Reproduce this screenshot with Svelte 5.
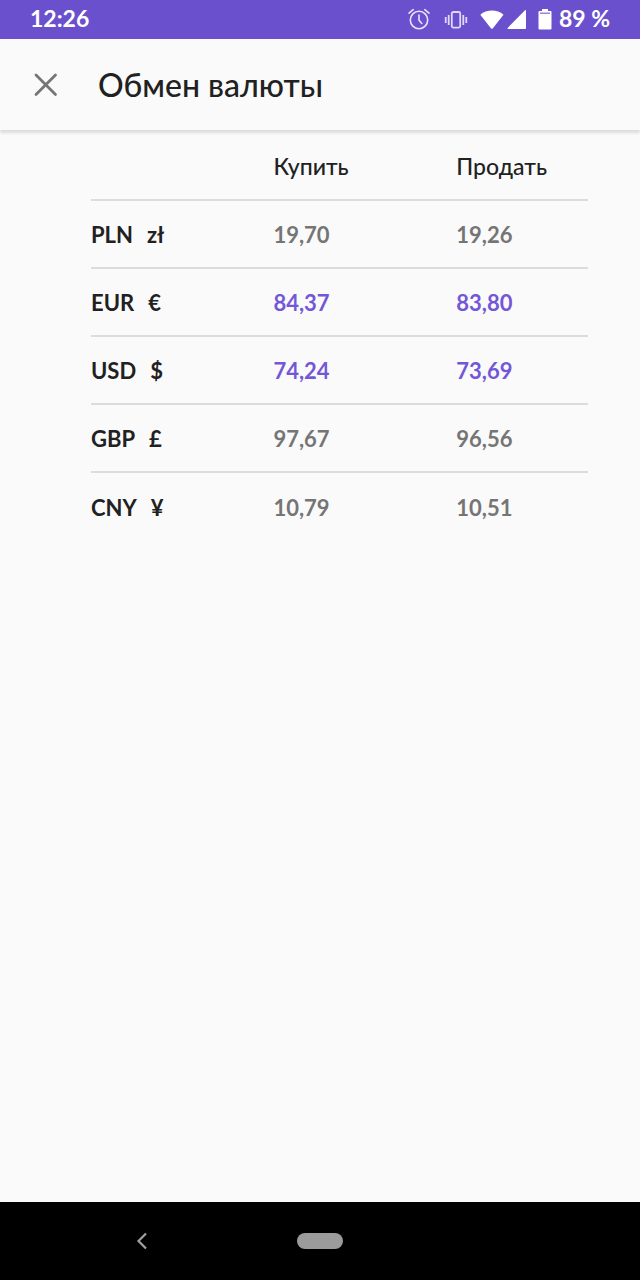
<script>
  const rates = [
    { code: 'PLN', sign: 'zł', buy: '19,70', sell: '19,26', main: false },
    { code: 'EUR', sign: '€', buy: '84,37', sell: '83,80', main: true },
    { code: 'USD', sign: '$', buy: '74,24', sell: '73,69', main: true },
    { code: 'GBP', sign: '£', buy: '97,67', sell: '96,56', main: false },
    { code: 'CNY', sign: '¥', buy: '10,79', sell: '10,51', main: false }
  ];
</script>

<div class="screen">
  <div class="status">
    <span>12:26</span>
    <div class="indicators">
      <svg width="22" height="24" viewBox="0 0 22 24" fill="none" stroke="#e9e3fb" stroke-width="1.6" stroke-linecap="round" aria-hidden="true">
        <circle cx="11" cy="14" r="8.7" />
        <path d="M11 9v5.300l2.800 3.200M1 7.100l4.200-3.400M21 7.100l-4.200-3.400" />
      </svg>
      <svg class="vibrate" width="24" height="24" viewBox="0 0 24 24" fill="none" stroke="#e0d8f8" stroke-width="1.8" aria-hidden="true">
        <rect x="7.8" y="6" width="8.4" height="15.6" rx="1.5" />
        <path d="M4.700 9v10M1.700 11v6M19.300 9v10M22.300 11v6" />
      </svg>
      <svg class="signal" width="47" height="24" viewBox="0 0 47 24" fill="#fff" aria-hidden="true">
        <path d="M0.300 8.700C6.500 3.200 17.300 3.200 23.500 8.700L12.900 22.300Q11.900 23.400 10.900 22.300Z" />
        <path d="M46 4.500v17.500q0 1-1 1H28.200q-1.500 0-.5-1.100L45 4.300q1-.9 1 .2Z" />
      </svg>
      <svg class="battery" width="14" height="24" viewBox="0 0 14 24" aria-hidden="true">
        <path fill="#fff" d="M4 3h6v2h2.500q1 0 1 1V22.500q0 1-1 1h-11q-1 0-1-1V6q0-1 1-1H4Z" />
        <path fill="#9a85df" d="M2 6.500h10v1.500H2Z" />
      </svg>
      <span>89 %</span>
    </div>
  </div>

  <header>
    <button aria-label="Закрыть">
      <svg width="24" height="24" viewBox="0 0 24 24" fill="none" stroke="#757575" stroke-width="2.800" stroke-linecap="round" aria-hidden="true">
        <path d="M2 2l19.500 19.500M21.500 2L2 21.500" />
      </svg>
    </button>
    <h1>Обмен валюты</h1>
  </header>

  <main>
    <table>
      <thead>
        <tr><td></td><th scope="col">Купить</th><th scope="col">Продать</th></tr>
      </thead>
      <tbody>
        {#each rates as rate}
          <tr class:main={rate.main}>
            <th scope="row"><span class="currency"><span>{rate.code}</span><span>{rate.sign}</span></span></th>
            <td>{rate.buy}</td>
            <td>{rate.sell}</td>
          </tr>
        {/each}
      </tbody>
    </table>
  </main>

  <nav>
    <button class="back" aria-label="Назад">
      <svg width="12" height="18" viewBox="0 0 12 18" fill="none" stroke="#a0a0a0" stroke-width="2.200" aria-hidden="true">
        <path d="M10 1.500L2.500 9l7.500 7.500" />
      </svg>
    </button>
    <button class="home" aria-label="Главный экран"></button>
    <span></span>
  </nav>
</div>

<style>
  :global(body) { margin: 0; background: #fafafa; }
  .screen {
    display: flex;
    flex-direction: column;
    min-height: 100vh;
    font-family: Lato, "Open Sans", sans-serif;
    color: #212121;
    background: #fafafa;
  }
  .status {
    box-sizing: border-box;
    display: flex;
    align-items: center;
    justify-content: space-between;
    height: 39px;
    padding: 0 30px 3px;
    color: #fff;
    background: #6b50cd;
    font-size: 23px;
    font-weight: 700;
    line-height: 36px;
  }
  .indicators { display: flex; align-items: center; }
  .vibrate { margin-left: 14px; }
  .signal { margin-left: 12px; }
  .battery { margin: 0 7px 0 11px; }
  button { padding: 0; border: 0; background: none; cursor: pointer; }
  button svg { display: block; }
  header {
    display: flex;
    align-items: center;
    gap: 40px;
    height: 91px;
    padding: 0 34px;
    box-shadow: 0 3px 3px #0000001f;
  }
  h1 { margin: 0; font-size: 32px; font-weight: 500; line-height: 40px; }
  main { flex: 1; padding: 2px 52px 0 91px; }
  table { width: 100%; table-layout: fixed; border-collapse: collapse; font-size: 23px; line-height: 28px; }
  th, td { box-sizing: border-box; height: 68px; padding: 0; text-align: left; }
  thead th { font-weight: 500; }
  thead td { width: 36.7%; }
  thead th { width: 36.8%; }
  thead th:last-child { width: 26.5%; }
  tbody { font-size: 22px; }
  tbody tr { border-top: 2px solid #dcdcdc; }
  tbody th, tbody td { padding-top: 2px; font-weight: 700; }
  tbody td { color: #757575; }
  .main td { color: #7357d6; }
  .currency { display: flex; gap: 14px; }
  nav {
    display: grid;
    grid-template-columns: 1fr 46px 1fr;
    align-items: center;
    justify-items: center;
    height: 78px;
    background: #000;
  }
  .back { padding-right: 14px; }
  .home { width: 46px; height: 16px; border-radius: 8px; background: #9b9b9b; }
</style>
